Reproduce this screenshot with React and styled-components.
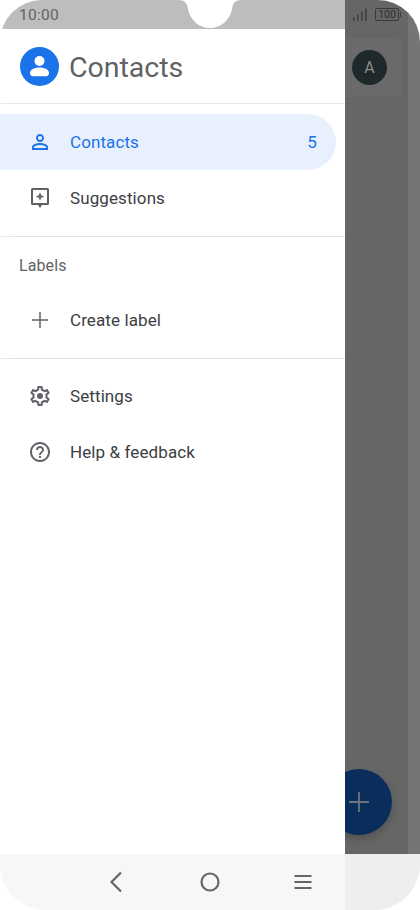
import React from "react";
import styled, { createGlobalStyle } from "styled-components";

const GlobalStyle = createGlobalStyle`
  html, body {
    margin: 0;
    padding: 0;
    background: #ffffff;
    font-family: Roboto, "Noto Sans", sans-serif;
  }
`;

const Phone = styled.div`
  position: relative;
  width: 420px;
  height: 910px;
  overflow: hidden;
  border-radius: 42px 42px 46px 46px;
  display: grid;
  grid-template-rows: 1fr 56px;

  &::before,
  &::after {
    content: "";
    position: absolute;
    top: 0;
    bottom: 56px;
    background: rgba(255, 255, 255, 0.1);
    pointer-events: none;
  }
  &::before { left: 0; width: 10px; }
  &::after { right: 0; width: 12px; }
`;

const Screen = styled.div`
  display: grid;
  grid-template-columns: 345px 75px;
  min-height: 0;
`;

const DrawerColumn = styled.div`
  display: flex;
  flex-direction: column;
  background: #fff;
`;

const StatusLeft = styled.div`
  position: relative;
  height: 29px;
  background: #bdbdbd;
  color: #636363;
  font-size: 15.5px;
  line-height: 30px;
  padding-left: 19px;
  letter-spacing: 0.3px;
`;

const Notch = styled.svg`
  position: absolute;
  top: 0;
  left: 178px;
`;

const Header = styled.div`
  height: 75px;
  box-sizing: border-box;
  display: flex;
  align-items: center;
  gap: 10px;
  padding: 0 0 0 20px;
  border-bottom: 1px solid #e8e8e8;
  color: #5f6368;
  font-size: 28.5px;
  font-weight: 400;
`;

const HeaderLabel = styled.span`
  position: relative;
  top: 1px;
`;

const Logo = styled.svg`
  flex: none;
  width: 39px;
  height: 39px;
`;

const Group = styled.div`
  padding: ${(p) => p.$pad || "10px 0"};
`;

const Divider = styled.div`
  height: 1px;
  background: #e4e4e4;
`;

const Row = styled.div`
  height: 56px;
  width: 336px;
  box-sizing: border-box;
  display: flex;
  align-items: center;
  padding: 0 19px 0 28px;
  border-radius: 0 28px 28px 0;
  background: ${(p) => (p.$active ? "#e8f0fe" : "transparent")};
  color: ${(p) => (p.$active ? "#1a73e8" : "#3c4043")};
  font-size: 17px;
  font-weight: 400;
  letter-spacing: 0.1px;
`;

const RowIcon = styled.svg`
  width: 24px;
  height: 24px;
  flex: none;
  margin-right: 18px;
  fill: ${(p) => (p.$active ? "#1a73e8" : "#5f6368")};
`;

const RowLabel = styled.span`
  flex: 1;
`;

const SectionTitle = styled.div`
  height: 55px;
  box-sizing: border-box;
  padding: 2px 0 0 19px;
  display: flex;
  align-items: center;
  color: #5f6368;
  font-size: 16px;
  font-weight: 400;
  letter-spacing: 0.1px;
`;

const Scrim = styled.div`
  position: relative;
  overflow: hidden;
  background: #666666;
`;

const StatusRight = styled.div`
  height: 29px;
  display: flex;
  align-items: flex-start;
  padding: 8px 0 0 8px;
  box-sizing: border-box;
  gap: 7px;
`;

const Battery = styled.div`
  position: relative;
  width: 24px;
  height: 13px;
  box-sizing: border-box;
  border: 1px solid #3a3a3a;
  border-radius: 2px;
  color: #2e2e2e;
  font-size: 10.5px;
  line-height: 11px;
  text-align: center;

  &::after {
    content: "";
    position: absolute;
    right: -3px;
    top: 3px;
    width: 1.5px;
    height: 5px;
    background: #3a3a3a;
  }
`;

const BehindCard = styled.div`
  margin: 9px 18px 0 -20px;
  height: 59px;
  padding-right: 15px;
  display: flex;
  align-items: center;
  justify-content: flex-end;
  background: #6a6a6a;
  border-radius: 6px;
`;

const Avatar = styled.div`
  width: 35px;
  height: 35px;
  border-radius: 50%;
  background: #1f282b;
  color: #8c8c8c;
  font-size: 16px;
  display: flex;
  align-items: center;
  justify-content: center;
`;

const Fab = styled.div`
  position: absolute;
  left: -19px;
  bottom: 19px;
  width: 66px;
  height: 66px;
  border-radius: 50%;
  background: #0a2e5c;
  box-shadow: 0 4px 10px rgba(0, 0, 0, 0.2);
  display: flex;
  align-items: center;
  justify-content: center;
`;

const FabPlus = styled.svg`
  width: 20px;
  height: 20px;
  fill: #6d747d;
`;

const NavBar = styled.div`
  position: relative;
  background: #f7f7f7;
  display: flex;
  align-items: center;
  justify-content: center;
  gap: 69px;

  &::after {
    content: "";
    position: absolute;
    top: 0;
    right: 0;
    bottom: 0;
    width: 75px;
    background: #eeeeee;
  }
`;

const NavIcon = styled.svg`
  width: 24px;
  height: 24px;
  fill: none;
  stroke: #666666;
  stroke-width: 2.2;
`;

const PERSON =
  "M12 5.9a2.1 2.1 0 1 1 0 4.2 2.1 2.1 0 0 1 0-4.2m0 9c2.97 0 6.1 1.46 6.1 2.1v1.1H5.9V17c0-.64 3.13-2.1 6.1-2.1M12 4C9.79 4 8 5.79 8 8s1.79 4 4 4 4-1.79 4-4-1.79-4-4-4zm0 9c-2.67 0-8 1.34-8 4v3h16v-3c0-2.66-5.33-4-8-4z";
const GEAR =
  "M19.43 12.98c.04-.32.07-.64.07-.98 0-.34-.03-.66-.07-.98l2.11-1.65c.19-.15.24-.42.12-.64l-2-3.46c-.09-.16-.26-.25-.44-.25-.06 0-.12.01-.17.03l-2.49 1c-.52-.4-1.08-.73-1.69-.98l-.38-2.65C14.46 2.18 14.25 2 14 2h-4c-.25 0-.46.18-.49.42l-.38 2.65c-.61.25-1.17.59-1.69.98l-2.49-1c-.06-.02-.12-.03-.18-.03-.17 0-.34.09-.43.25l-2 3.46c-.13.22-.07.49.12.64l2.11 1.65c-.04.32-.07.65-.07.98 0 .33.03.66.07.98l-2.11 1.65c-.19.15-.24.42-.12.64l2 3.46c.09.16.26.25.44.25.06 0 .12-.01.17-.03l2.49-1c.52.4 1.08.73 1.69.98l.38 2.65c.03.24.24.42.49.42h4c.25 0 .46-.18.49-.42l.38-2.65c.61-.25 1.17-.59 1.69-.98l2.49 1c.06.02.12.03.18.03.17 0 .34-.09.43-.25l2-3.46c.12-.22.07-.49-.12-.64l-2.11-1.65zm-1.98-1.71c.04.31.05.52.05.73 0 .21-.02.43-.05.73l-.14 1.13.89.7 1.08.84-.7 1.21-1.27-.51-1.04-.42-.9.68c-.43.32-.84.56-1.25.73l-1.06.43-.16 1.13-.2 1.35h-1.4l-.19-1.35-.16-1.13-1.06-.43c-.43-.18-.83-.41-1.23-.71l-.91-.7-1.06.43-1.27.51-.7-1.21 1.08-.84.89-.7-.14-1.13c-.03-.31-.05-.54-.05-.74s.02-.43.05-.73l.14-1.13-.89-.7-1.08-.84.7-1.21 1.27.51 1.04.42.9-.68c.43-.32.84-.56 1.25-.73l1.06-.43.16-1.13.2-1.35h1.39l.19 1.35.16 1.13 1.06.43c.43.18.83.41 1.23.71l.91.7 1.06-.43 1.27-.51.7 1.21-1.07.85-.89.7.14 1.13z";
const HELP =
  "M11 18h2v-2h-2v2zm1-16C6.48 2 2 6.48 2 12s4.48 10 10 10 10-4.48 10-10S17.52 2 12 2zm0 18c-4.41 0-8-3.59-8-8s3.59-8 8-8 8 3.59 8 8-3.59 8-8 8zm0-14c-2.21 0-4 1.79-4 4h2c0-1.1.9-2 2-2s2 .9 2 2c0 2-3 1.75-3 5h2c0-2.25 3-2.5 3-5 0-2.21-1.79-4-4-4z";

function Signal() {
  return (
    <svg width="15" height="13" viewBox="0 0 15 13" fill="#3f3f3f">
      <rect x="0" y="9" width="1.6" height="4" />
      <rect x="4" y="6.500" width="1.6" height="6.500" />
      <rect x="8" y="3.500" width="1.600" height="9.500" />
      <rect x="12" y="0.500" width="1.600" height="12.500" />
    </svg>
  );
}

export default function App() {
  return (
    <>
      <GlobalStyle />
      <Phone>
        <Screen>
          <DrawerColumn>
            <StatusLeft>
              10:00
              <Notch width="64" height="29" viewBox="0 0 64 29" fill="#fff">
                <path d="M0 0C7 0 9 3 10 9 12 20 21 28 32 28 43 28 52 20 54 9 55 3 57 0 64 0Z" />
              </Notch>
            </StatusLeft>
            <Header>
              <Logo viewBox="0 0 39 39">
                <circle cx="19.5" cy="19.5" r="19.5" fill="#1a73e8" />
                <circle cx="19.5" cy="14" r="5" fill="#fff" />
                <path d="M10 26c0-3.6 5.6-5.4 9.5-5.4S29 22.400 29 26c0 2-1 3.200-3 3.200H13c-2 0-3-1.200-3-3.200z" fill="#fff" />
              </Logo>
              <HeaderLabel>Contacts</HeaderLabel>
            </Header>
            <Group>
              <Row $active>
                <RowIcon $active viewBox="0 0 24 24">
                  <path d={PERSON} />
                </RowIcon>
                <RowLabel>Contacts</RowLabel>
                5
              </Row>
              <Row>
                <RowIcon viewBox="0 0 24 24">
                  <path
                    fillRule="evenodd"
                    d="M4.500 2h15A1.500 1.500 0 0 1 21 3.500v14a1.500 1.500 0 0 1-1.500 1.500H14L12 22l-2-3H4.500A1.500 1.500 0 0 1 3 17.500v-14A1.500 1.500 0 0 1 4.500 2zM5 4v13h14V4zm7 2.200 1.200 3.100 3.100 1.200-3.100 1.200-1.200 3.100-1.200-3.100-3.100-1.200 3.100-1.200z"
                  />
                </RowIcon>
                <RowLabel>Suggestions</RowLabel>
              </Row>
            </Group>
            <Divider />
            <Group $pad="0 0 10px">
              <SectionTitle>Labels</SectionTitle>
              <Row>
                <RowIcon viewBox="0 0 24 24">
                  <path d="M11.250 4h1.500v7.250H20v1.500h-7.250V20h-1.500v-7.250H4v-1.500h7.250z" />
                </RowIcon>
                <RowLabel>Create label</RowLabel>
              </Row>
            </Group>
            <Divider />
            <Group $pad="9px 0">
              <Row>
                <RowIcon viewBox="0 0 24 24">
                  <path d={GEAR} />
                  <circle cx="12" cy="12" r="3" />
                </RowIcon>
                <RowLabel>Settings</RowLabel>
              </Row>
              <Row>
                <RowIcon viewBox="0 0 24 24">
                  <path d={HELP} />
                </RowIcon>
                <RowLabel>Help &amp; feedback</RowLabel>
              </Row>
            </Group>
          </DrawerColumn>
          <Scrim>
            <StatusRight>
              <Signal />
              <Battery>100</Battery>
            </StatusRight>
            <BehindCard>
              <Avatar>A</Avatar>
            </BehindCard>
            <Fab>
              <FabPlus viewBox="0 0 20 20">
                <path d="M9.100 0h1.800v9.100H20v1.800h-9.100V20H9.100v-9.100H0V9.100h9.100z" />
              </FabPlus>
            </Fab>
          </Scrim>
        </Screen>
        <NavBar>
          <NavIcon viewBox="0 0 24 24">
            <path d="M16 2.500 6.500 12l9.500 9.500" />
          </NavIcon>
          <NavIcon viewBox="0 0 24 24">
            <circle cx="12" cy="12" r="8.500" />
          </NavIcon>
          <NavIcon viewBox="0 0 24 24">
            <path d="M3.500 6h17M3.500 12h17M3.500 18h17" />
          </NavIcon>
        </NavBar>
      </Phone>
    </>
  );
}
